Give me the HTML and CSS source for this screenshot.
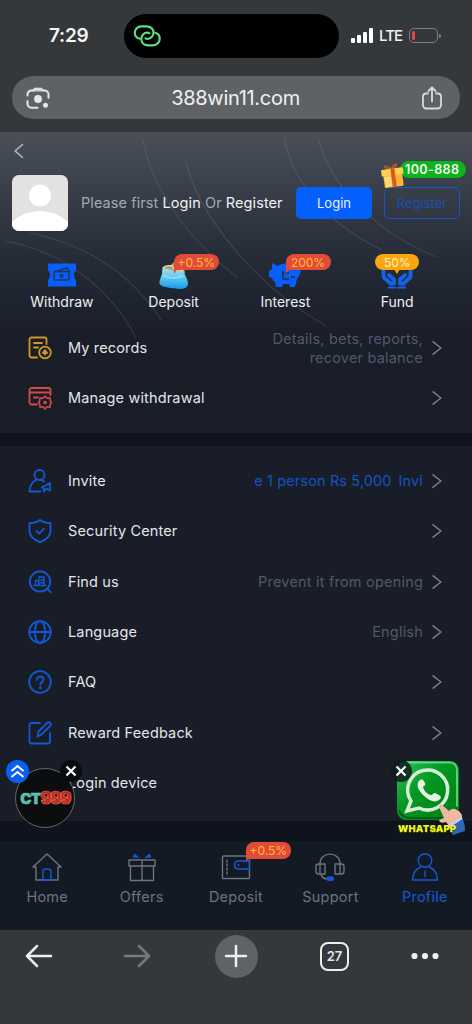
FILE: index.html
```html
<!DOCTYPE html>
<html lang="en">
<head>
<meta charset="utf-8">
<title>388win11.com</title>
<link rel="stylesheet" href="styles.css">
</head>
<body>
<svg class="defs" width="0" height="0">
  <symbol id="chev" viewBox="0 0 12 18"><path d="M1.500 2.300 9.800 9l-8.300 6.700" fill="none" stroke="currentColor" stroke-width="1.500"/></symbol>
</svg>
<div class="phone">
  <header class="status">
    <div class="time">7:29</div>
    <div class="island">
      <svg width="30" height="24" viewBox="0 0 30 24" fill="none" stroke="#5fdc7c" stroke-width="2.200" stroke-linecap="round"><path d="M7.500 14.600C4.500 14 2.800 11.500 2.800 8.800c0-3.700 2.800-6.500 6.500-6.500h5.200c4.100 0 7 2.700 7 6.200 0 3.800-2.800 6.300-5.800 6.300-1.500 0-2.200-.4-2.200-.4"/><path d="M23.200 8.800c2.800.7 4.500 3 4.500 5.600 0 3.900-2.800 7-6.700 7h-4.700c-4.100 0-7-2.700-7-6.300 0-3.900 2.800-6.400 5.800-6.400 1.500 0 2.200.4 2.200.4"/></svg>
    </div>
    <div class="signal"><i class="b1"></i><i class="b2"></i><i class="b3"></i><i class="b4"></i></div>
    <div class="lte">LTE</div>
    <div class="battery"><i></i></div>
    <span class="battery-tip"></span>
  </header>

  <div class="url">
    <svg width="24" height="24" viewBox="0 0 24 24" fill="none" stroke="#e4e6e8" stroke-width="2" stroke-linecap="round"><path d="M1.500 9.500V8.500a4 4 0 0 1 4-4h1.500M17 4.500h1.500a4 4 0 0 1 4 4v3.300M1.500 15v2.700a4 4 0 0 0 4 4h6"/><path d="M6.500 4.600 8.300 2.200h7.400l1.800 2.400z" fill="#e4e6e8" stroke-linejoin="round" stroke-width="1"/><circle cx="12" cy="13" r="3.900" fill="#e4e6e8" stroke="none"/><circle cx="19.500" cy="19.300" r="2.500" fill="#e4e6e8" stroke="none"/></svg>
    <span>388win11.com</span>
    <svg width="22" height="24" viewBox="0 0 22 24" fill="none" stroke="#d7dadc" stroke-width="1.800" stroke-linecap="round" stroke-linejoin="round"><path d="M7 7.500H5a3 3 0 0 0-3 3v8.700a3.300 3.300 0 0 0 3.300 3.300h11.400a3.300 3.300 0 0 0 3.300-3.300v-8.700a3 3 0 0 0-3-3h-2M11 15.500V2M7.300 5.200 11 1.500l3.700 3.700"/></svg>
  </div>

  <main class="page">
    <section class="top">
      <svg class="waves" width="472" height="220" viewBox="0 0 472 220" fill="none" stroke="#a6afbd" stroke-opacity=".16" stroke-width="1.200"><path d="M143 8C152 55 185 105 238 146M186 30C198 80 250 150 326 194M284 5C292 45 320 88 382 118M319 8C328 45 365 95 436 125M4 109C60 118 110 155 136 206M30 101C85 112 130 140 161 188"/></svg>
      <div class="back"><svg width="12" height="16" viewBox="0 0 12 16"><path d="M10 1.200 2.200 8l7.800 6.800" fill="none" stroke="#adb3bb" stroke-width="1.600"/></svg></div>
      <div class="account">
        <svg class="avatar" width="56" height="56" viewBox="0 0 56 56"><rect width="56" height="56" fill="#e2e2e2"/><circle cx="28" cy="20.500" r="11" fill="#fff"/><path d="M0 47Q12 36 28 36t28 11v9H0z" fill="#fff"/></svg>
        <p>Please first <b>Login</b> Or <b>Register</b></p>
        <div class="btn solid">Login</div>
        <div class="btn outline">Register
          <div class="promo">100-888</div>
          <svg class="gift" width="26" height="27" viewBox="0 0 26 27"><g transform="rotate(-8 13 15)"><path d="M12 7C5-1 3 6 12 7c9-1 7-9 0 0" fill="none" stroke="#a95e20" stroke-width="1.600"/><rect x="3.500" y="10" width="19" height="15" rx="1" fill="#fdb63a"/><rect x="2" y="6.500" width="22" height="6.500" rx="1" fill="#ffcf58"/><path d="M4 14h7v10H5z" fill="#ffda79"/><path d="M11.500 6.500h4v18.500h-4z" fill="#d9581c"/></g></svg>
        </div>
      </div>
      <div class="quick">
        <div class="q"><svg width="30" height="26" viewBox="0 0 30 26"><path d="M1 1h28v6.500q-4 5 0 10V24H1v-6.500q4-5 0-10z" fill="#075ff8"/><g fill="none" stroke="#173767" stroke-width="1.500"><rect x="7" y="9" width="15" height="8.500" rx="1"/><path d="m10 8.500 10-3 1.500 3M22 11l1-3"/></g><circle cx="14.500" cy="13.200" r="2" fill="#173767"/></svg><span>Withdraw</span></div>
        <div class="q"><svg width="32" height="29" viewBox="0 0 32 29"><defs><linearGradient id="purse" x1="0" y1="0" x2="0" y2="1"><stop stop-color="#a4e3ec"/><stop offset=".5" stop-color="#5cc6ef"/><stop offset="1" stop-color="#109af0"/></linearGradient></defs><path d="M4 6 13 3l3-3 10 3 2 9H4z" fill="#a99c72"/><path d="M4 6c4 3 8 0 11 4 4 2 8 0 11-1 2 6 5 10 5 14 0 5-5 6-10 6-8-1-16-2-19-4-3-2-1-6 0-9C4 12 3 9 4 6z" fill="url(#purse)"/><path d="M4 7q2-4 10-3l3 6 9-1" fill="none" stroke="#efdba0" stroke-width="1.300"/><path d="M4 14c8 5 15 4 22 1" fill="none" stroke="#d4fbf8" stroke-width="1.400" opacity=".5"/></svg><em class="tag">+0.5%</em><span>Deposit</span></div>
        <div class="q"><svg width="34" height="27" viewBox="0 0 34 27"><path d="m4 1 6 3c4-3 13-4 19 2q2 1 4 1-1 7-4 10l-2 8h-5l-1-3h-6l-1 3H8l-1-5q-2-1-3-4l-3-1V9l3-2z" fill="#075ff8"/><path d="M15 9v8h6M17 11h4M23 15h4" fill="none" stroke="#173767" stroke-width="2.200"/></svg><em class="tag cut">200%</em><span>Interest</span></div>
        <div class="q"><svg width="32" height="27" viewBox="0 0 32 27" fill="none" stroke="#1363ea" stroke-linecap="round" stroke-linejoin="round"><path d="M2.500 9v6l7 6.500h3.500v-4l-5-4.500M29.500 9v6l-7 6.500H19v-4l5-4.500" stroke-width="3.800"/><path d="M8 25.500h6.500M17.500 25.500H24" stroke-width="2.200"/></svg><em class="tag gold">50%</em><span>Fund</span></div>
      </div>
      <div class="row">
        <svg class="ic yellow" viewBox="0 0 24 24"><path d="M9 21.500H3.500a2 2 0 0 1-2-2v-16a2 2 0 0 1 2-2h13a2 2 0 0 1 2 2V8M6 7h8M6 11.500h4"/><circle cx="17" cy="16.500" r="5.800"/><path d="m17 13 3 3.500q0 2-2.300 1.500v1.500h-1.400V18q-2.300.5-2.300-1.500z" fill="currentColor" stroke="none"/></svg>
        <span class="name">My records</span><span class="note">Details, bets, reports,<br>recover balance</span><svg class="chev"><use href="#chev"/></svg>
      </div>
      <div class="row">
        <svg class="ic red" viewBox="0 0 24 24"><path d="M9 18.500H3.500a2 2 0 0 1-2-2V4a2 2 0 0 1 2-2h17a2 2 0 0 1 2 2v5M2 6.500h20M6 11.500h4"/><path d="m17 10 2 2.200 3-.3.300 3 1.200 1.600-1.200 1.600-.3 3-3-.3-2 2.200-2-2.200-3 .3-.3-3-1.200-1.600 1.200-1.600.3-3 3 .3z" stroke-width="1.600"/><circle cx="17" cy="16.500" r="1.400" fill="currentColor" stroke-width="1"/></svg>
        <span class="name">Manage withdrawal</span><svg class="chev"><use href="#chev"/></svg>
      </div>
    </section>

    <section class="list">
      <div class="row"><svg class="ic" viewBox="0 0 24 24"><circle cx="11.500" cy="6" r="5"/><path d="M8 11q-6 3-6.500 11.500h11M14 11l2 1.500M13.500 18.500 22 14v7.500l-3.500-2-2.500 3-.5-3.500z"/></svg><span class="name">Invite</span><span class="note blue"><i>e 1 person Rs 5,000</i><i>Invi</i></span><svg class="chev"><use href="#chev"/></svg></div>
      <div class="row"><svg class="ic" viewBox="0 0 24 24"><path d="M12 1Q16 4 22.500 4v8c0 6-5 9-10.500 11.200C6.500 21 1.500 18 1.500 12V4Q8 4 12 1zM8.500 12l2.800 2.600 4.700-5"/></svg><span class="name">Security Center</span><svg class="chev"><use href="#chev"/></svg></div>
      <div class="row"><svg class="ic" viewBox="0 0 24 24"><circle cx="12" cy="11.500" r="10.200"/><path d="m19.500 19 3.300 3.300"/><path d="M6 15.500h12M7.500 15.500v-5h3v5M11 15.500V7h5v8.500M12.800 10H15M12.800 12.700H15" stroke-width="1.400"/></svg><span class="name">Find us</span><span class="note">Prevent it from opening</span><svg class="chev"><use href="#chev"/></svg></div>
      <div class="row"><svg class="ic" viewBox="0 0 24 24"><circle cx="12" cy="12" r="10.800"/><ellipse cx="12" cy="12" rx="5.200" ry="10.800"/><path d="M1 12h22"/></svg><span class="name">Language</span><span class="note">English</span><svg class="chev"><use href="#chev"/></svg></div>
      <div class="row"><svg class="ic" viewBox="0 0 24 24"><circle cx="12" cy="12" r="10.800"/><path d="M8.800 9.800c0-4.500 6.700-4.200 6.700-.3 0 2.700-3.200 2.400-3.200 5"/><path d="M12.300 17.500v.8" stroke-width="2.300"/></svg><span class="name">FAQ</span><svg class="chev"><use href="#chev"/></svg></div>
      <div class="row"><svg class="ic" viewBox="0 0 24 24"><path d="M12 2H3.500a2 2 0 0 0-2 2v16.500a2 2 0 0 0 2 2H20a2 2 0 0 0 2-2V12M9.500 15.500l1-5L19 2q2-1.500 3.300 0 1 1.500-.3 3l-8.500 8.500z"/></svg><span class="name">Reward Feedback</span><svg class="chev"><use href="#chev"/></svg></div>
      <div class="row"><span class="ic"></span><span class="name">Login device</span></div>
    </section>

    <aside class="ct">
      <div class="disc"><span class="c">CT</span><span class="n">999</span></div>
      <svg class="up" width="23" height="23" viewBox="0 0 23 23"><circle cx="11.500" cy="11.500" r="11.500" fill="#095ff2"/><path d="m5.500 11 6-5 6 5m-12 6 6-5 6 5" fill="none" stroke="#fff" stroke-width="1.900"/></svg>
      <svg class="close" width="22" height="22" viewBox="0 0 22 22"><circle cx="11" cy="11" r="11" fill="#080b10"/><path d="m6.500 6.500 9 9m0-9-9 9" stroke="#fff" stroke-width="2.200"/></svg>
    </aside>
    <aside class="wa">
      <svg width="76" height="76" viewBox="0 0 76 76"><defs><linearGradient id="green" x1="0" y1="0" x2="1" y2="1"><stop stop-color="#2fc660"/><stop offset=".4" stop-color="#019a22"/><stop offset="1" stop-color="#007b10"/></linearGradient></defs><rect x="7" y="1" width="62" height="59" rx="9" fill="url(#green)"/><path d="M17 2.500h44q6 1 6 8v36" fill="none" stroke="#8beeb0" stroke-width="2" opacity=".65"/><path d="M9 50q2 8 12 8h38q7 0 8-9" fill="none" stroke="#075e16" stroke-width="2"/><path d="M17 51l4-10A20 20 0 1 1 29 48z" fill="none" stroke="#d8edd7" stroke-width="3.500"/><path d="M30 20c-4 3-3 9 3 15s12 8 16 5c3-2 2-4 0-5l-4-2c-2 0-3 3-4 2-4-1-7-4-8-8 1-1 3-2 2-4l-2-3c-1-1-2-1-3 0z" fill="#e4f2e2"/><path d="m51 44 8 7q4-4 8-1 6 3 5 9l-13 7-3-4q-6 2-7-2l5-2-5-11q0-3 2-3z" fill="#f0b8a3"/><path d="m58 67 14-9q3 4 3 13l-12 4z" fill="#2f65b6"/><path d="m58 67 14-9" stroke="#b5d5ff" stroke-width="2.500"/></svg>
      <strong>WHATSAPP</strong>
      <svg class="close" width="22" height="22" viewBox="0 0 22 22"><circle cx="11" cy="11" r="11" fill="#111d1ddd"/><path d="m6.500 6.500 9 9m0-9-9 9" stroke="#fff" stroke-width="2.200"/></svg>
    </aside>
  </main>

  <nav class="tabs">
    <div><svg width="32" height="32" viewBox="0 0 32 32"><path d="M5 16H2L16 3l14 13h-3v13H5z"/><path class="accent" d="M12 29V20.500q0-2.500 2.500-2.500h3q2.500 0 2.500 2.500V29z"/></svg><span>Home</span></div>
    <div><svg width="32" height="32" viewBox="0 0 32 32"><path d="M3 9h26v6H3zM4.500 15v14.500h23V15M16 9v20.500"/><path d="m7 6 1.500-3 4.500 3.500zM25 6l-1.500-3L19 6.500z" fill="#1359dd" stroke="#1359dd" stroke-width=".6"/></svg><span>Offers</span></div>
    <div><svg width="32" height="32" viewBox="0 0 32 32"><rect x="2.500" y="5" width="27" height="22.500" rx="1"/><path d="M7 9v15" stroke-dasharray="2 2"/><path class="accent" d="M29.500 10H19q-4.500 0-4.500 4t4.500 4h10.500z"/><circle cx="18.500" cy="14" r="1" fill="#1359dd" stroke="none"/></svg><em class="tag cut">+0.5%</em><span>Deposit</span></div>
    <div><svg width="32" height="32" viewBox="0 0 32 32"><path d="M6 13C6-.2 26-.2 26 13M6 13H4.500A2.500 2.500 0 0 0 2 15.500v5A2.500 2.500 0 0 0 4.500 23H6zM7 13h4v10H6M26 13h1.500a2.500 2.500 0 0 1 2.500 2.500v5a2.500 2.500 0 0 1-2.500 2.500H26zM25 13h-4v10h5M7 23q1 5 7 5"/><rect x="12.500" y="25.500" width="7.500" height="4.500" rx="2" fill="#1359dd" stroke="none"/></svg><span>Support</span></div>
    <div class="on"><svg width="32" height="32" viewBox="0 0 32 32"><circle cx="16" cy="9.500" r="6.800"/><path d="M11.500 16Q3.500 20 3.500 29h25q0-9-8-13M16 20v5.500"/></svg><span>Profile</span></div>
  </nav>

  <footer class="chrome">
    <div><svg width="28" height="24" viewBox="0 0 28 24"><path d="M26 12H2M12 2 2 12l10 10"/></svg></div>
    <div class="dim"><svg width="28" height="24" viewBox="0 0 28 24"><path d="M2 12h24M16 2l10 10-10 10"/></svg></div>
    <div><span class="plus"><svg width="24" height="24" viewBox="0 0 24 24"><path d="M12 2v20M2 12h20"/></svg></span></div>
    <div><span class="count">27</span></div>
    <div><svg width="28" height="8" viewBox="0 0 28 8"><g fill="#eceef0" stroke="none"><circle cx="3.500" cy="4" r="3.100"/><circle cx="14" cy="4" r="3.100"/><circle cx="24.500" cy="4" r="3.100"/></g></svg></div>
  </footer>
</div>
</body>
</html>
```
FILE: styles.css
```css
* { box-sizing: border-box; }
body { margin: 0; background: #35383b; }
.defs { position: absolute; }
i, em { font-style: normal; }
.phone {
  width: 472px; height: 1024px; overflow: hidden;
  display: flex; flex-direction: column;
  background: #35383b;
  font-family: Inter, "Liberation Sans", sans-serif;
  font-size: 15px; color: #e3e6eb;
}

/* Phone status bar */
.status { height: 76px; flex: none; display: flex; align-items: center; padding: 0 30px 5px 49px; }
.time { width: 75px; font-size: 19px; font-weight: 600; letter-spacing: -.2px; color: #f6f7f8; }
.island { width: 215px; height: 44px; border-radius: 22px; background: #000; padding: 10px 0 0 8px; }
.signal { width: 22px; height: 15px; margin-left: 12px; display: flex; align-items: flex-end; gap: 2px; }
.signal i { width: 4px; border-radius: 1px; background: #fff; }
.b1 { height: 5px; } .b2 { height: 8px; } .b3 { height: 11px; } .b4 { height: 15px; }
.lte { width: 30px; margin-left: 6px; font-size: 15px; font-weight: 500; letter-spacing: -.9px; color: #f1f2f3; }
.battery { width: 29px; height: 15px; padding: 2px; border: 1px solid #7c8083; border-radius: 5px; }
.battery i { display: block; width: 3px; height: 9px; border-radius: 2px; background: #eb4150; }
.battery-tip { width: 2px; height: 4px; margin-left: 1px; border-radius: 0 2px 2px 0; background: #7c8083; }

.url {
  height: 43px; flex: none; margin: 0 12px 13px; padding: 0 17px 0 14px;
  border-radius: 22px; background: #5f6265;
  display: flex; align-items: center; justify-content: space-between;
}
.url span { font-size: 20px; letter-spacing: -.3px; color: #f0f1f2; }

/* Profile page */
.page { position: relative; height: 709px; flex: none; background: #0f131e; }
.top { position: relative; height: 301px; background: linear-gradient(#4a4f58 0, #383e49 62px, #252b37 125px, #191e29 205px, #181d28); }
.top > * { position: relative; }
.top > .waves { position: absolute; left: 0; top: 0; }
.back { height: 43px; padding: 11px 0 0 13px; }
.account { height: 56px; display: flex; align-items: center; padding: 0 12px; }
.avatar { border-radius: 7px; }
.account p { width: 215px; margin: -2px 0 0 13px; font-size: 14.5px; white-space: nowrap; letter-spacing: .08px; color: #a2a8b3; }
.account b { font-weight: 400; color: #f0f2f5; }
.btn {
  position: relative; height: 32px; width: 76px; border-radius: 5px;
  display: flex; align-items: center; justify-content: center; font-size: 13px;
}
.solid { background: #0360fc; color: #e8f0ff; }
.outline { margin-left: 12px; border: 1px solid #1b55bd; color: #1c4fae; }
.promo {
  position: absolute; left: 15px; top: -27px; width: 66px; height: 17px; padding-left: 5px;
  border-radius: 9px; background: #0eb21c; color: #eefbee;
  font-size: 12.5px; line-height: 17px; font-weight: 600; letter-spacing: .4px; white-space: nowrap;
}
.gift { position: absolute; left: -5px; top: -26px; }
.quick { height: 92px; display: grid; grid-template-columns: repeat(4, 1fr); padding: 31px 19px 0 6px; }
.q { position: relative; height: 56px; display: flex; flex-direction: column; align-items: center; justify-content: flex-start; }
.q > svg { height: 27px; flex: none; }
.q > span { margin-top: 4px; font-size: 14px; line-height: 17px; color: #edf0f4; }
.tag {
  position: absolute; left: 56px; top: -8px; width: 45px; height: 16px;
  border-radius: 8px 8px 8px 2px; background: #e24b3b; color: #ffc02c;
  font-size: 12px; line-height: 17px; text-align: center; z-index: 1;
}
.tag::after { content: ""; position: absolute; left: 0; top: 11px; border-top: 9px solid #e24b3b; border-right: 6px solid transparent; }
.tag.gold { left: 34px; width: 44px; border-radius: 8px; background: #f9a70c; color: #fff1ca; }
.tag.gold::after { left: 19px; top: 15px; border: 3px solid transparent; border-top: 5px solid #f9a70c; }
.row { height: 50.3px; display: flex; align-items: center; padding: 0 29px 0 28px; }
.ic { width: 24px; height: 24px; flex: none; fill: none; stroke: currentColor; stroke-width: 1.8; stroke-linejoin: round; stroke-linecap: round; color: #1259d8; }
.yellow { color: #d49a20; }
.red { color: #cf4a49; }
.name { flex: 1; margin: -1px 0 0 16px; font-size: 14.5px; letter-spacing: .15px; white-space: nowrap; }
.note { margin-top: -1px; font-size: 14.5px; line-height: 19px; text-align: right; letter-spacing: .2px; color: #4f596b; white-space: nowrap; }
.note.blue { display: flex; gap: 7px; letter-spacing: .12px; color: #1553c3; }
.chev { width: 12px; height: 18px; margin-left: 8px; flex: none; color: #777d88; }
.list { height: 375px; margin-top: 13px; padding-top: 10px; background: #181d28; }

/* Floating promotions */
.ct { position: absolute; left: 15px; top: 636px; width: 60px; height: 60px; }
.disc {
  width: 60px; height: 60px; border-radius: 50%; border: 1px solid #656969; background: #0b0d0e;
  display: flex; align-items: center; justify-content: center;
  font-size: 15px; font-weight: 900; letter-spacing: -.7px;
}
.c { color: #53bfae; -webkit-text-stroke: .4px #83d4c4; }
.n { color: #bb2922; font-size: 17px; letter-spacing: -1.7px; -webkit-text-stroke: .7px #ef6550; }
.up { position: absolute; left: -9px; top: -8px; }
.ct .close { position: absolute; left: 45px; top: -8px; }
.wa { position: absolute; left: 390px; top: 628px; width: 76px; height: 76px; }
.wa .close { position: absolute; left: 0; top: 0; }
.wa strong { position: absolute; left: 8px; top: 63px; font-size: 9.500px; line-height: 12px; font-weight: 900; letter-spacing: .2px; color: #eef419; text-shadow: 0 1px #354900; }

/* Site tabs */
.tabs { height: 89px; flex: none; display: grid; grid-template-columns: repeat(5, 1fr); background: #131a24; color: #6c7480; }
.tabs div { position: relative; display: flex; flex-direction: column; align-items: center; padding-top: 10px; }
.tabs svg { fill: none; stroke: currentColor; stroke-width: 1.4; stroke-linejoin: round; stroke-linecap: round; }
.tabs .accent { stroke: #1359dd; }
.tabs span { margin-top: 5px; font-size: 14.5px; line-height: 18px; letter-spacing: .25px; }
.tabs .tag { left: 57px; top: 1px; height: 17px; line-height: 17px; }
.tabs .on { color: #1359d5; }

/* Browser toolbar */
.chrome { flex: 1; display: grid; grid-template-columns: 77px 120px 78px 119px 61px; align-items: start; background: #35383b; }
.chrome div { height: 52px; display: flex; align-items: center; justify-content: center; }
.chrome svg { fill: none; stroke: #eceef0; stroke-width: 2.5; stroke-linecap: round; stroke-linejoin: round; }
.chrome .dim svg { stroke: #777a7d; }
.plus { width: 43px; height: 43px; display: flex; align-items: center; justify-content: center; border-radius: 50%; background: #606366; }
.count { width: 29px; height: 29px; display: flex; align-items: center; justify-content: center; border: 2.5px solid #eceef0; border-radius: 8px; font-size: 13px; font-weight: 600; }
```
